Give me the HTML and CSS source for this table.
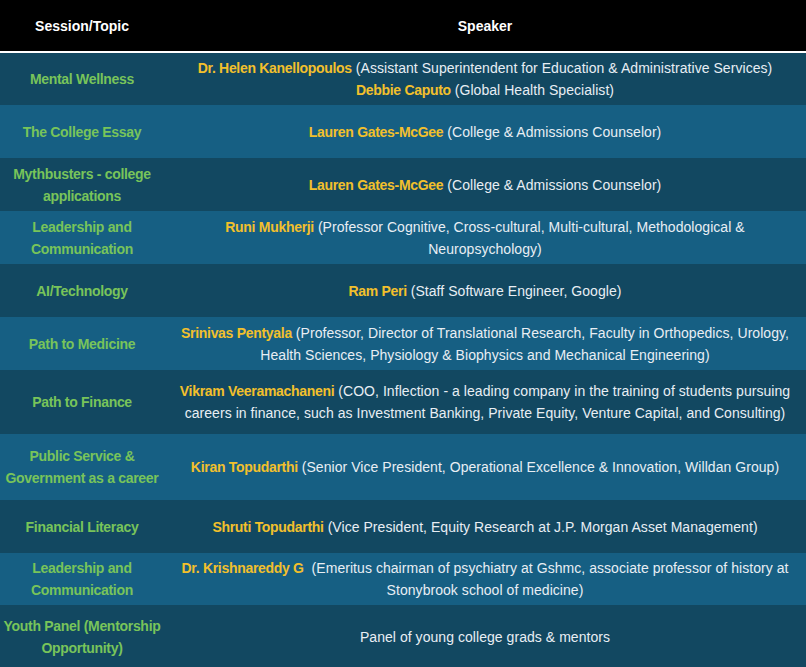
FILE: index.html
```html
<!DOCTYPE html>
<html>
<head>
<meta charset="utf-8">
<link rel="stylesheet" href="styles.css">
</head>
<body>
<table class="agenda">
  <thead>
    <tr class="head-row">
      <th class="col-topic">Session/Topic</th>
      <th class="col-speaker">Speaker</th>
    </tr>
  </thead>
  <tbody>
    <tr class="row dark h53">
      <td class="topic">Mental Wellness</td>
      <td class="speaker"><span class="name">Dr. Helen Kanellopoulos</span> (Assistant Superintendent for Education &amp; Administrative Services)<br><span class="name">Debbie Caputo</span> (Global Health Specialist)</td>
    </tr>
    <tr class="row light h53">
      <td class="topic">The College Essay</td>
      <td class="speaker"><span class="name">Lauren Gates-McGee</span> (College &amp; Admissions Counselor)</td>
    </tr>
    <tr class="row dark h53">
      <td class="topic">Mythbusters - college applications</td>
      <td class="speaker"><span class="name">Lauren Gates-McGee</span> (College &amp; Admissions Counselor)</td>
    </tr>
    <tr class="row light h53">
      <td class="topic">Leadership and Communication</td>
      <td class="speaker"><span class="name">Runi Mukherji</span> (Professor Cognitive, Cross-cultural, Multi-cultural, Methodological &amp;<br>Neuropsychology)</td>
    </tr>
    <tr class="row dark h53">
      <td class="topic">AI/Technology</td>
      <td class="speaker"><span class="name">Ram Peri</span> (Staff Software Engineer, Google)</td>
    </tr>
    <tr class="row light h53">
      <td class="topic">Path to Medicine</td>
      <td class="speaker"><span class="name">Srinivas Pentyala</span> (Professor, Director of Translational Research, Faculty in Orthopedics, Urology,<br>Health Sciences, Physiology &amp; Biophysics and Mechanical Engineering)</td>
    </tr>
    <tr class="row dark h64">
      <td class="topic">Path to Finance</td>
      <td class="speaker"><span class="name">Vikram Veeramachaneni</span> (COO, Inflection - a leading company in the training of students pursuing<br>careers in finance, such as Investment Banking, Private Equity, Venture Capital, and Consulting)</td>
    </tr>
    <tr class="row light h66">
      <td class="topic">Public Service &amp; Government as a career</td>
      <td class="speaker"><span class="name">Kiran Topudarthi</span> (Senior Vice President, Operational Excellence &amp; Innovation, Willdan Group)</td>
    </tr>
    <tr class="row dark h53">
      <td class="topic">Financial Literacy</td>
      <td class="speaker"><span class="name">Shruti Topudarthi</span> (Vice President, Equity Research at J.P. Morgan Asset Management)</td>
    </tr>
    <tr class="row light h52">
      <td class="topic">Leadership and Communication</td>
      <td class="speaker"><span class="name">Dr. Krishnareddy G</span>&nbsp; (Emeritus chairman of psychiatry at Gshmc, associate professor of history at<br>Stonybrook school of medicine)</td>
    </tr>
    <tr class="row dark h64">
      <td class="topic">Youth Panel (Mentorship<br>Opportunity)</td>
      <td class="speaker">Panel of young college grads &amp; mentors</td>
    </tr>
  </tbody>
</table>
</body>
</html>
```
FILE: styles.css
```css
html, body {
  margin: 0;
  padding: 0;
  background: #124861;
}
body {
  font-family: "Liberation Sans", Arial, sans-serif;
  font-size: 14px;
}
.agenda {
  width: 806px;
  border-collapse: collapse;
  table-layout: fixed;
}
.col-topic { width: 164px; }
.head-row {
  background: #000;
  height: 52px;
  border-bottom: 2px solid #fff;
}
.head-row th {
  color: #fff;
  font-weight: bold;
  text-align: center;
  vertical-align: middle;
  padding: 0;
}
.row td {
  text-align: center;
  vertical-align: middle;
  padding: 0;
  line-height: 22px;
}
.dark { background: #124861; }
.light { background: #165f83; }
.h52 { height: 52px; }
.h53 { height: 53px; }
.h64 { height: 64px; }
.h66 { height: 66px; }
.topic {
  color: #78c45a;
  font-weight: bold;
  letter-spacing: -0.3px;
  white-space: normal;
}
.speaker {
  color: #e8eef4;
  letter-spacing: 0.05px;
}
.name {
  color: #f2c02c;
  font-weight: bold;
  letter-spacing: -0.3px;
}
```
